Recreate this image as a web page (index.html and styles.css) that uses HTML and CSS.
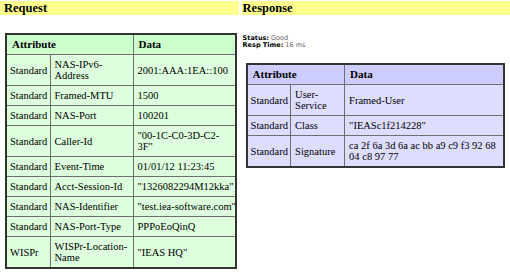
FILE: index.html
```html
<!DOCTYPE html>
<html>
<head>
<meta charset="utf-8">
<link rel="stylesheet" href="styles.css">
</head>
<body>
<div class="page">
  <section class="col col-req">
    <div class="bar">Request</div>
    <table class="attrs green">
      <colgroup><col class="c1"><col class="c2"><col class="c3"></colgroup>
      <tr><th colspan="2">Attribute</th><th>Data</th></tr>
      <tr><td>Standard</td><td>NAS-IPv6-Address</td><td>2001:AAA:1EA::100</td></tr>
      <tr><td>Standard</td><td>Framed-MTU</td><td>1500</td></tr>
      <tr><td>Standard</td><td>NAS-Port</td><td>100201</td></tr>
      <tr><td>Standard</td><td>Caller-Id</td><td>"00-1C-C0-3D-C2-3F"</td></tr>
      <tr><td>Standard</td><td>Event-Time</td><td>01/01/12 11:23:45</td></tr>
      <tr><td>Standard</td><td>Acct-Session-Id</td><td>"1326082294M12kka"</td></tr>
      <tr><td>Standard</td><td>NAS-Identifier</td><td class="nw">"test.iea-software.com"</td></tr>
      <tr><td>Standard</td><td>NAS-Port-Type</td><td>PPPoEoQinQ</td></tr>
      <tr><td>WISPr</td><td>WISPr-Location-Name</td><td>"IEAS HQ"</td></tr>
    </table>
  </section>
  <section class="col col-resp">
    <div class="bar">Response</div>
    <div class="status">
      <div><b>Status:</b> <span>Good</span></div>
      <div><b>Resp Time:</b> <span>16 ms</span></div>
    </div>
    <table class="attrs blue">
      <colgroup><col class="r1"><col class="r2"><col class="r3"></colgroup>
      <tr><th colspan="2">Attribute</th><th>Data</th></tr>
      <tr><td>Standard</td><td>User-Service</td><td>Framed-User</td></tr>
      <tr><td>Standard</td><td>Class</td><td>"IEASc1f214228"</td></tr>
      <tr><td>Standard</td><td>Signature</td><td>ca 2f 6a 3d 6a ac bb a9 c9 f3 92 68 04 c8 97 77</td></tr>
    </table>
  </section>
</div>
</body>
</html>
```
FILE: styles.css
```css
html, body { margin: 0; padding: 0; background: #fff; }
body { font-family: "Liberation Serif", "Times New Roman", serif; color: #000; }
.page { display: flex; padding-top: 1px; }
.col-req { width: 240px; }
.col-resp { width: 270px; padding-left: 3px; }
.bar {
  background: #ffff90;
  height: 14px;
  line-height: 14px;
  font-weight: bold;
  font-size: 12.5px;
  padding-left: 4px;
}
.col-resp .bar { padding-left: 1px; }
.attrs {
  border-collapse: collapse;
  table-layout: fixed;
  border: 2px solid #333;
  font-size: 10.5px;
  line-height: 11px;
}
.attrs th, .attrs td {
  border: 1px solid #6f6f6f;
  text-align: left;
  vertical-align: middle;
  padding: 4px 1px 4px 3px;
}
.attrs td:nth-child(2) { padding-left: 4px; }
.attrs td:nth-child(3) { padding-left: 4px; }
.attrs th { font-size: 11px; padding: 4px 5px; }
.nw { white-space: nowrap; }
.green { margin: 18px 0 0 5px; width: 232px; background: #ddffdd; }
.green th { background: #ccffcc; }
.green .c1 { width: 44px; }
.green .c2 { width: 83px; }
.blue { margin: 14px 0 0 4px; width: 259px; background: #ddddff; }
.blue th { background: #ccccff; }
.blue .r1 { width: 44px; }
.blue .r2 { width: 54px; }
.status {
  margin: 20px 0 0 1px;
  font-family: "DejaVu Sans", Verdana, sans-serif;
  font-size: 6.5px;
  line-height: 7px;
}
.status span { color: #666; }
```
